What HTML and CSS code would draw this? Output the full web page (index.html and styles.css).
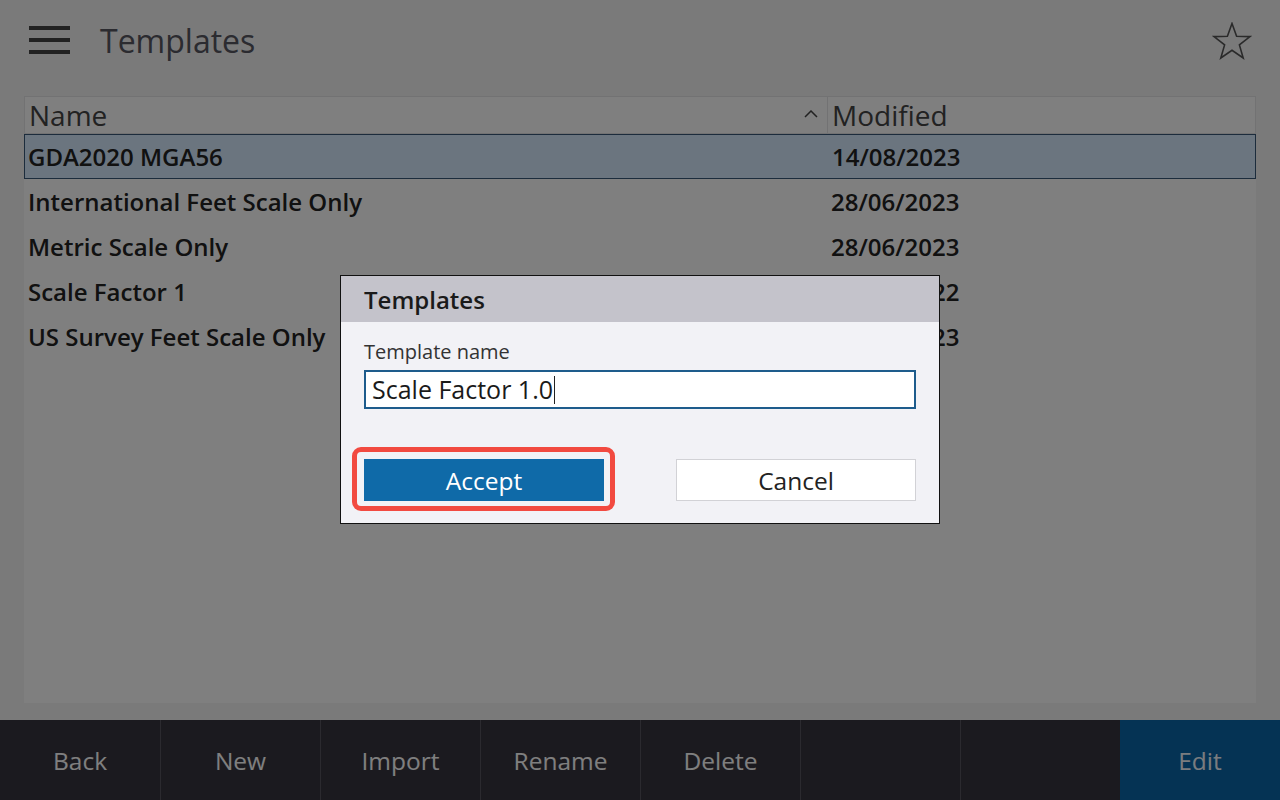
FILE: index.html
```html
<!DOCTYPE html>
<html lang="en">
<head>
  <meta charset="utf-8">
  <meta name="viewport" content="width=device-width, initial-scale=1.0">
  <title>Templates</title>
  <link rel="stylesheet" href="styles.css">
</head>
<body>

  <div class="app">
    <header class="topbar">
      <button class="menu-btn" aria-label="Menu">
        <span></span><span></span><span></span>
      </button>
      <h1 class="title">Templates</h1>
      <button class="fav-btn" aria-label="Favourite">
        <svg width="40" height="38" viewBox="0 0 40 38">
          <polygon points="20,1.5 24.6,14.2 38,14.6 27.4,22.9 31.2,36 20,28.3 8.8,36 12.6,22.9 2,14.6 15.4,14.2"
                   fill="none" stroke="#555" stroke-width="1.6" stroke-linejoin="miter"/>
        </svg>
      </button>
    </header>

    <div class="panel">
      <div class="list-head">
        <div class="col-name">Name
          <svg class="sort" width="14" height="8" viewBox="0 0 14 8"><polyline points="1,7 7,1 13,7" fill="none" stroke="#444" stroke-width="1.5"/></svg>
        </div>
        <div class="col-date">Modified</div>
      </div>
      <div class="row selected">
        <div class="col-name">GDA2020 MGA56</div>
        <div class="col-date">14/08/2023</div>
      </div>
      <div class="row">
        <div class="col-name">International Feet Scale Only</div>
        <div class="col-date">28/06/2023</div>
      </div>
      <div class="row">
        <div class="col-name">Metric Scale Only</div>
        <div class="col-date">28/06/2023</div>
      </div>
      <div class="row">
        <div class="col-name">Scale Factor 1</div>
        <div class="col-date">14/03/2022</div>
      </div>
      <div class="row">
        <div class="col-name">US Survey Feet Scale Only</div>
        <div class="col-date">28/06/2023</div>
      </div>
    </div>

    <nav class="toolbar">
      <button class="tool">Back</button>
      <button class="tool">New</button>
      <button class="tool">Import</button>
      <button class="tool">Rename</button>
      <button class="tool">Delete</button>
      <button class="tool"></button>
      <button class="tool"></button>
      <button class="tool primary">Edit</button>
    </nav>
  </div>

  <div class="dim"></div>

  <div class="dialog">
    <div class="dialog-head">Templates</div>
    <div class="dialog-body">
      <label class="field-label" for="tplname">Template name</label>
      <div class="field" id="tplname">Scale Factor 1.0<span class="caret"></span></div>
      <div class="dialog-actions">
        <button class="btn btn-accept">Accept</button>
        <button class="btn btn-cancel">Cancel</button>
      </div>
    </div>
  </div>

</body>
</html>
```

FILE: styles.css
```css
body {
  margin: 0;
  font-family: "Open Sans", "Noto Sans", sans-serif;
  background-color: #f4f4f5;
  color: #222;
  width: 1280px;
  height: 800px;
  overflow: hidden;
}
button { font-family: inherit; border: none; background: none; padding: 0; cursor: pointer; }

.app { display: flex; flex-direction: column; height: 800px; }

/* Bovenbalk */
.topbar { height: 80px; display: flex; align-items: center; padding: 0 28px 0 29px; }
.menu-btn { width: 41px; height: 28px; display: flex; flex-direction: column; justify-content: space-between; }
.menu-btn span { display: block; height: 4px; background-color: #444; }
.title { margin: 0 0 0 30px; font-size: 32px; font-weight: 400; color: #565660; flex: 1; line-height: 1; padding-top: 2px; }
.fav-btn { width: 40px; height: 38px; margin-top: 2px; }

/* Lijst */
.panel { flex: 1; margin: 16px 24px 17px; background-color: #fff; }
.list-head { display: flex; height: 38px; border: 1px solid #e4e4e6; box-sizing: border-box; align-items: center; font-size: 28px; color: #444; }
.list-head .col-name { position: relative; border-right: 1px solid #e4e4e6; height: 100%; display: flex; align-items: center; }
.sort { position: absolute; right: 9px; top: 13px; }
.col-name { width: 803px; padding-left: 4px; box-sizing: border-box; }
.col-date { padding-left: 4px; }

.row { display: flex; align-items: center; height: 45px; font-size: 24px; font-weight: 600; color: #222; box-sizing: border-box; }
.row .col-name { padding-left: 4px; }
.row.selected { background-color: #d6eaff; border: 1px solid #385878; }
.row.selected .col-name { padding-left: 3px; }
.row.selected .col-date { padding-left: 4px; }

/* Onderbalk */
.toolbar { height: 80px; display: flex; background-color: #36343f; }
.tool { width: 160px; height: 80px; color: #fff; font-size: 24.5px; border-left: 1px solid #56545f; }
.tool:first-child { border-left: none; }
.tool.primary { background-color: #0a66a8; color: #f4f9ff; border-left: none; }

/* Overlay en dialoog */
.dim { position: absolute; top: 0; left: 0; width: 1280px; height: 800px; background-color: rgba(0, 0, 0, 0.5); }

.dialog {
  position: absolute;
  left: 340px;
  top: 275px;
  width: 600px;
  border: 1px solid #111;
  box-sizing: border-box;
  background-color: #f2f2f6;
}
.dialog-head { height: 46px; background-color: #c4c3cb; padding-left: 23px; display: flex; align-items: center; font-size: 24px; font-weight: 600; color: #1a1a1a; }
.dialog-body { padding: 18px 23px 22px; }
.field-label { display: block; font-size: 20px; line-height: 24px; color: #333; }
.field {
  margin-top: 6px;
  height: 39px;
  border: 2px solid #1e5c8c;
  box-sizing: border-box;
  background-color: #fff;
  padding-left: 6px;
  font-size: 25px;
  font-weight: 500;
  line-height: 35px;
  color: #1a1a1a;
  display: flex;
  align-items: center;
}
.caret { display: inline-block; width: 1px; height: 28px; background-color: #222; margin-left: 1px; }

.dialog-actions { display: flex; justify-content: space-between; margin-top: 50px; }
.btn { width: 240px; height: 42px; font-size: 24.5px; font-weight: 500; box-sizing: border-box; }
.btn-accept { position: relative; background-color: #0f6aa8; color: #fff; }
.btn-accept::after {
  content: "";
  position: absolute;
  left: -12px;
  top: -12px;
  right: -11px;
  bottom: -10px;
  border: 5px solid #f24a40;
  border-radius: 9px;
}
.btn-cancel { background-color: #fff; border: 1px solid #d2d2d6; color: #222; }
```
